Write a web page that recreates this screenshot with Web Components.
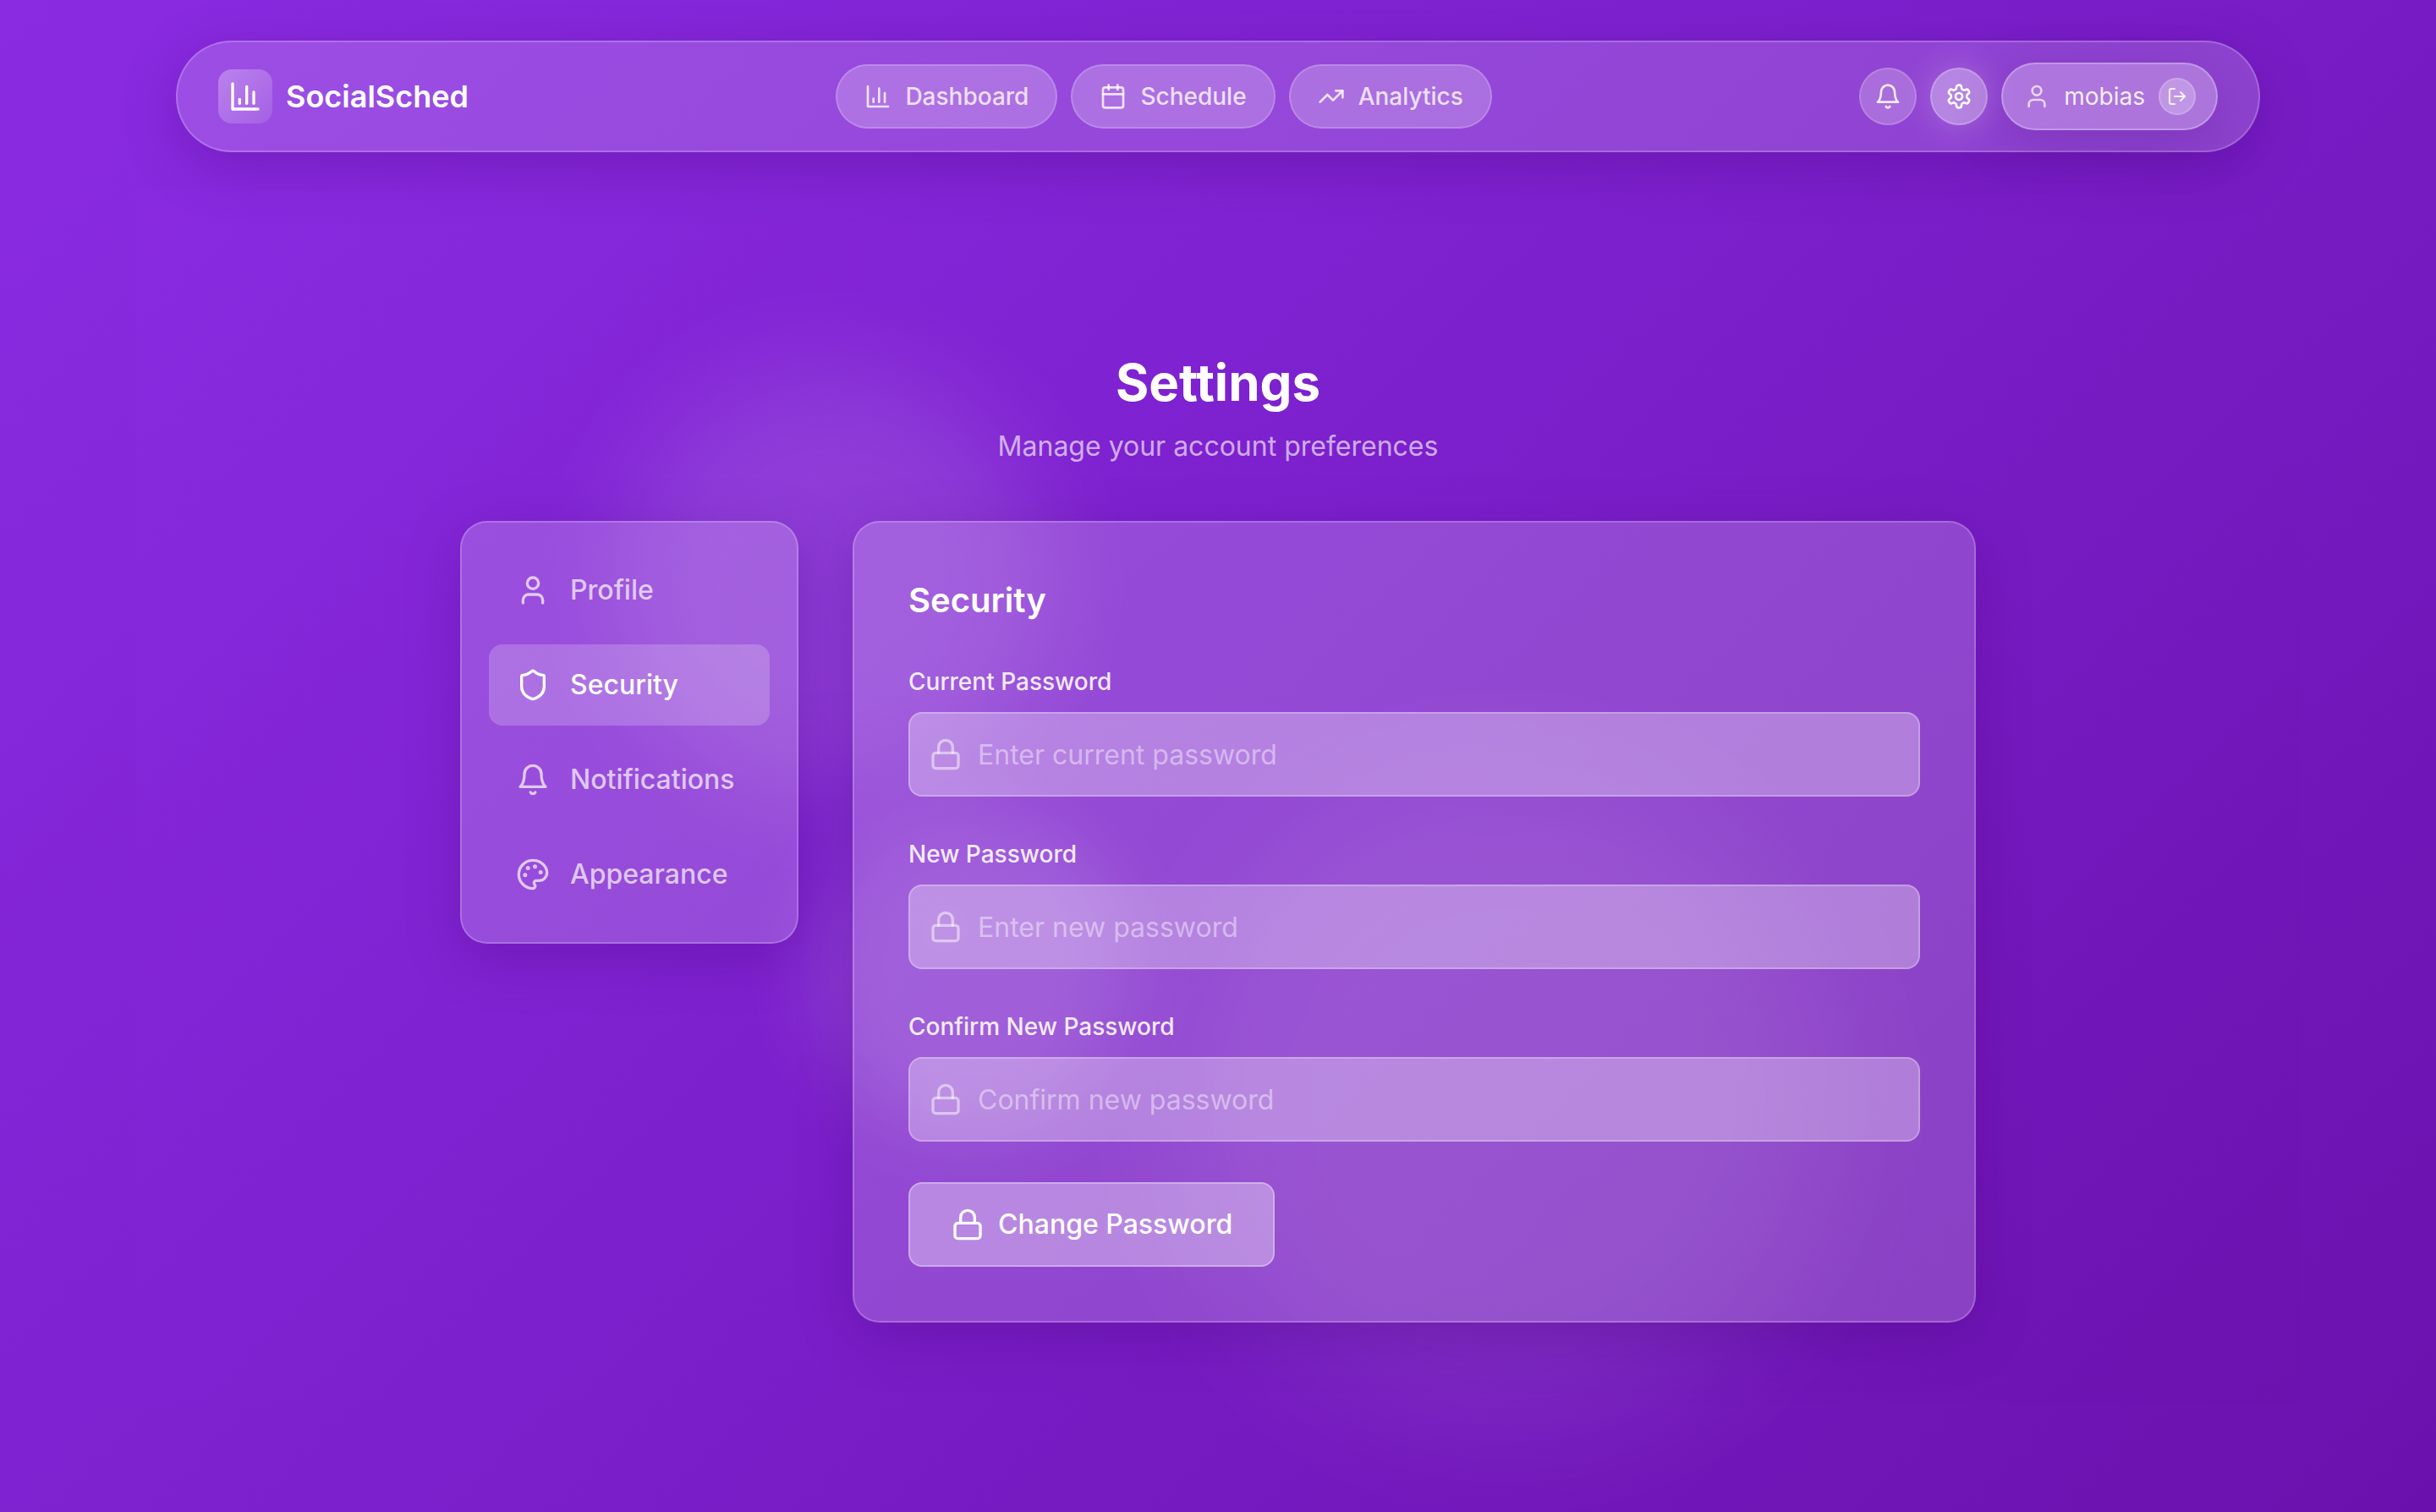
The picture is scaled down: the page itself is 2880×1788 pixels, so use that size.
<!DOCTYPE html>
<html lang="en">
<head>
<meta charset="utf-8">
<title>SocialSched – Settings</title>
<style>
  html, body { margin: 0; }
  body { font-family: Inter, "Noto Sans", sans-serif; color: #fff; }
</style>
</head>
<body>
<social-app></social-app>
<script>
const ICONS = {
  chart: '<path d="M3 3v18h18"/><path d="M18 17V9"/><path d="M13 17V5"/><path d="M8 17v-3"/>',
  calendar: '<path d="M8 2v4"/><path d="M16 2v4"/><rect x="3" y="4" width="18" height="18" rx="2"/><path d="M3 10h18"/>',
  trend: '<path d="M22 7 13.5 15.5l-5-5L2 17"/><path d="M16 7h6v6"/>',
  bell: '<path d="M6 8a6 6 0 0 1 12 0c0 7 3 9 3 9H3s3-2 3-9"/><path d="M10.3 21a1.94 1.94 0 0 0 3.4 0"/>',
  gear: '<path d="M12.22 2h-.44a2 2 0 0 0-2 2v.18a2 2 0 0 1-1 1.73l-.43.25a2 2 0 0 1-2 0l-.15-.08a2 2 0 0 0-2.73.73l-.22.38a2 2 0 0 0 .73 2.73l.15.1a2 2 0 0 1 1 1.72v.51a2 2 0 0 1-1 1.74l-.15.09a2 2 0 0 0-.73 2.73l.22.38a2 2 0 0 0 2.73.73l.15-.08a2 2 0 0 1 2 0l.43.25a2 2 0 0 1 1 1.73V20a2 2 0 0 0 2 2h.44a2 2 0 0 0 2-2v-.18a2 2 0 0 1 1-1.73l.43-.25a2 2 0 0 1 2 0l.15.08a2 2 0 0 0 2.73-.73l.22-.39a2 2 0 0 0-.73-2.73l-.15-.08a2 2 0 0 1-1-1.74v-.5a2 2 0 0 1 1-1.74l.15-.09a2 2 0 0 0 .73-2.73l-.22-.38a2 2 0 0 0-2.73-.73l-.15.08a2 2 0 0 1-2 0l-.43-.25a2 2 0 0 1-1-1.73V4a2 2 0 0 0-2-2z"/><circle cx="12" cy="12" r="3"/>',
  user: '<path d="M19 21v-2a4 4 0 0 0-4-4H9a4 4 0 0 0-4 4v2"/><circle cx="12" cy="7" r="4"/>',
  logout: '<path d="M9 21H5a2 2 0 0 1-2-2V5a2 2 0 0 1 2-2h4"/><path d="m16 17 5-5-5-5"/><path d="M21 12H9"/>',
  shield: '<path d="M20 13c0 5-3.5 7.5-7.66 8.95a1 1 0 0 1-.67-.01C7.5 20.5 4 18 4 13V6a1 1 0 0 1 1-1c2 0 4.500-1.200 6.240-2.720a1.170 1.170 0 0 1 1.520 0C14.510 3.810 17 5 19 5a1 1 0 0 1 1 1z"/>',
  palette: '<g fill="currentColor"><circle cx="13.500" cy="6.500" r=".5"/><circle cx="17.500" cy="10.500" r=".5"/><circle cx="8.500" cy="7.500" r=".5"/><circle cx="6.500" cy="12.500" r=".5"/></g><path d="M12 2C6.500 2 2 6.500 2 12s4.500 10 10 10c.926 0 1.648-.746 1.648-1.688 0-.437-.180-.835-.437-1.125-.290-.289-.438-.652-.438-1.125a1.640 1.640 0 0 1 1.668-1.668h1.996c3.051 0 5.555-2.503 5.555-5.554C21.965 6.012 17.461 2 12 2z"/>',
  lock: '<rect x="3" y="11" width="18" height="11" rx="2"/><path d="M7 11V7a5 5 0 0 1 10 0v4"/>'
};

class Base extends HTMLElement {
  constructor() { super(); this.attachShadow({ mode: 'open' }); }
  connectedCallback() { this.shadowRoot.innerHTML = '<style>*{box-sizing:border-box}' + this.css() + '</style>' + this.html(); }
  css() { return ''; }
  html() { return '<slot></slot>'; }
}

customElements.define('ui-icon', class extends Base {
  css() { return ':host{display:block;flex:none;width:var(--icon,32px);height:var(--icon,32px)} svg{display:block;width:100%;height:100%}'; }
  html() {
    return `<svg viewBox="0 0 24 24" fill="none" stroke="currentColor" stroke-width="2" stroke-linecap="round" stroke-linejoin="round" aria-hidden="true">${ICONS[this.getAttribute('name')]}</svg>`;
  }
});

customElements.define('glow-backdrop', class extends Base {
  css() { return `
    :host{--sweep:linear-gradient(135deg,#8a2be2 0%,#7b1fcb 50%,#6a11ad 100%);position:absolute;inset:0;overflow:hidden;background:var(--sweep)}
    .panel{position:absolute;inset:224px 160px 128px;background:var(--sweep);opacity:.5}
    i{position:absolute;border-radius:50%;filter:blur(60px)}
    .a{width:512px;height:512px;left:728px;top:432px;background:rgba(255,255,255,.11)}
    .b{width:384px;height:384px;left:956px;top:956px;background:rgba(255,255,255,.12);filter:blur(44px)}
    .c{width:768px;height:768px;left:1400px;top:920px;background:rgba(255,255,255,.08);filter:blur(80px)}`; }
  html() { return '<div class="panel"></div><i class="a"></i><i class="b"></i><i class="c"></i>'; }
});

customElements.define('nav-link', class extends Base {
  css() { return `
    :host{display:block}
    a{display:flex;align-items:center;gap:16px;height:76px;padding:0 32px;border:2px solid rgba(255,255,255,.18);border-radius:38px;background:rgba(255,255,255,.22);color:rgba(255,255,255,.8);font-size:28px;line-height:40px;font-weight:500;text-decoration:none;white-space:nowrap}`; }
  html() { return `<a href="#"><ui-icon name="${this.getAttribute('icon')}"></ui-icon><span><slot></slot></span></a>`; }
});

customElements.define('round-button', class extends Base {
  css() { return `
    :host{display:block}
    button{display:flex;align-items:center;justify-content:center;width:68px;height:68px;padding:0;border:2px solid rgba(255,255,255,.16);border-radius:50%;background:rgba(255,255,255,.22);color:rgba(255,255,255,.85)}
    :host([active]) button{background:rgba(255,255,255,.35);border-color:rgba(255,255,255,.2);color:#fff;box-shadow:0 0 40px rgba(255,255,255,.2)}
    :host([small]) button{width:44px;height:44px;background:rgba(255,255,255,.25);--icon:24px}`; }
  html() { return `<button type="button" aria-label="${this.getAttribute('label')}"><ui-icon name="${this.getAttribute('icon')}"></ui-icon></button>`; }
});

customElements.define('app-bar', class extends Base {
  css() { return `
    :host{display:block;padding:48px 208px 12px}
    header{display:flex;align-items:center;justify-content:space-between;height:132px;padding:0 48px;border:2px solid rgba(255,255,255,.2);border-radius:66px;background:rgba(255,255,255,.17);box-shadow:0 16px 64px rgba(60,0,110,.26)}
    .brand{display:flex;align-items:center;gap:16px;font-size:36px;line-height:48px;font-weight:600;--icon:40px}
    .mark{display:flex;align-items:center;justify-content:center;width:64px;height:64px;border-radius:16px;background:linear-gradient(135deg,rgba(255,255,255,.3),rgba(255,255,255,.1))}
    nav,.tools{display:flex;align-items:center;gap:16px}
    .user{display:flex;align-items:center;gap:16px;height:80px;padding:0 24px;border:2px solid rgba(255,255,255,.25);border-radius:40px;background:rgba(255,255,255,.27);box-shadow:0 16px 64px rgba(60,0,110,.2);font-size:28px;line-height:40px;color:rgba(255,255,255,.9)}
    .user>ui-icon{color:rgba(255,255,255,.7)}`; }
  html() { return `
    <header>
      <div class="brand"><div class="mark"><ui-icon name="chart"></ui-icon></div><span>SocialSched</span></div>
      <nav><nav-link icon="chart">Dashboard</nav-link><nav-link icon="calendar">Schedule</nav-link><nav-link icon="trend">Analytics</nav-link></nav>
      <div class="tools">
        <round-button icon="bell" label="Notifications"></round-button>
        <round-button icon="gear" label="Settings" active></round-button>
        <div class="user"><ui-icon name="user"></ui-icon><span>mobias</span><round-button icon="logout" label="Log out" small></round-button></div>
      </div>
    </header>`; }
});

customElements.define('glass-card', class extends Base {
  css() { return `
    :host{display:block;padding:var(--pad,64px);border:2px solid rgba(255,255,255,.2);border-radius:32px;background:rgba(255,255,255,.19);box-shadow:0 16px 64px rgba(60,0,110,.26)}`; }
});

customElements.define('side-item', class extends Base {
  css() { return `
    :host{display:block}
    button{display:flex;align-items:center;gap:24px;width:100%;height:96px;padding:0 32px;border:0;border-radius:16px;background:none;color:rgba(255,255,255,.7);font:500 32px/48px Inter,sans-serif;text-align:left;--icon:40px}
    :host([active]) button{background:rgba(255,255,255,.2);color:#fff}`; }
  html() { return `<button type="button"><ui-icon name="${this.getAttribute('icon')}"></ui-icon><span><slot></slot></span></button>`; }
});

customElements.define('password-field', class extends Base {
  css() { return `
    :host{display:flex;flex-direction:column;gap:16px}
    label{font-size:28px;line-height:40px;font-weight:500;color:rgba(255,255,255,.9)}
    .box{display:grid;align-items:center;--icon:40px}
    .box>*{grid-area:1/1}
    ui-icon{margin-left:24px;color:rgba(255,255,255,.5);pointer-events:none;filter:drop-shadow(0 0 20px rgba(255,255,255,.3))}
    input{width:100%;height:100px;padding:0 32px 0 80px;border:2px solid rgba(255,255,255,.25);border-radius:16px;outline:0;background:rgba(255,255,255,.31);color:#fff;font:400 32px/48px Inter,sans-serif}
    input::placeholder{color:rgba(255,255,255,.45);opacity:1}`; }
  html() { return `<label for="f">${this.getAttribute('label')}</label><div class="box"><input id="f" type="password" placeholder="${this.getAttribute('placeholder')}"><ui-icon name="lock"></ui-icon></div>`; }
});

customElements.define('primary-button', class extends Base {
  css() { return `
    :host{display:block}
    button{display:flex;align-items:center;gap:16px;height:100px;padding:0 48px;border:2px solid rgba(255,255,255,.3);border-radius:16px;background:rgba(255,255,255,.35);color:#fff;font:500 32px/48px Inter,sans-serif;--icon:40px}`; }
  html() { return `<button type="submit"><ui-icon name="${this.getAttribute('icon')}"></ui-icon><span><slot></slot></span></button>`; }
});

customElements.define('settings-page', class extends Base {
  css() { return `
    :host{display:flex;flex-direction:column;justify-content:center;flex:1;width:100%;max-width:1792px;margin:0 auto}
    .head{text-align:center;margin-bottom:64px}
    h1{margin:0 0 16px;font-size:60px;line-height:72px;font-weight:700}
    p{margin:0;font-size:32px;line-height:48px;font-weight:400;color:rgba(255,255,255,.65)}
    .cols{display:grid;grid-template-columns:400px 1fr;gap:64px;align-items:start}
    .side{--pad:32px}
    .side nav{display:flex;flex-direction:column;gap:16px}
    h2{margin:0;font-size:40px;line-height:56px;font-weight:600}
    form{display:flex;flex-direction:column;align-items:stretch;gap:48px}
    primary-button{align-self:flex-start}`; }
  html() { return `
    <div class="head"><h1>Settings</h1><p>Manage your account preferences</p></div>
    <div class="cols">
      <glass-card class="side"><nav>
        <side-item icon="user">Profile</side-item>
        <side-item icon="shield" active>Security</side-item>
        <side-item icon="bell">Notifications</side-item>
        <side-item icon="palette">Appearance</side-item>
      </nav></glass-card>
      <glass-card><form>
        <h2>Security</h2>
        <password-field label="Current Password" placeholder="Enter current password"></password-field>
        <password-field label="New Password" placeholder="Enter new password"></password-field>
        <password-field label="Confirm New Password" placeholder="Confirm new password"></password-field>
        <primary-button icon="lock">Change Password</primary-button>
      </form></glass-card>
    </div>`; }
});

customElements.define('social-app', class extends Base {
  css() { return `
    :host{display:flex;flex-direction:column;position:relative;min-height:100vh}
    app-bar,settings-page{position:relative}`; }
  html() { return '<glow-backdrop></glow-backdrop><app-bar></app-bar><settings-page></settings-page>'; }
});
</script>
</body>
</html>
